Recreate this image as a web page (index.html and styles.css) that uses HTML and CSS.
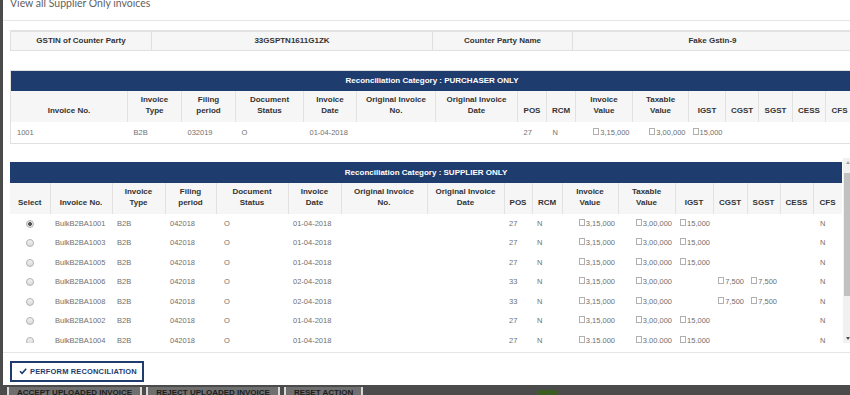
FILE: index.html
```html
<!DOCTYPE html>
<html lang="en">
<head>
    <meta charset="UTF-8">
    <meta name="viewport" content="width=device-width, initial-scale=1.0">
    <title>View all Supplier Only invoices</title>
    <link rel="stylesheet" href="styles.css">
</head>
<body>
    <div class="modal">
        <div class="modal-head">View all Supplier Only invoices</div>
        <div class="modal-body">
            <table class="party">
                <colgroup><col style="width:141px"><col style="width:281px"><col style="width:140px"><col style="width:280px"></colgroup>
                <tr>
                    <td>GSTIN of Counter Party</td>
                    <td>33GSPTN1611G1ZK</td>
                    <td>Counter Party Name</td>
                    <td>Fake Gstin-9</td>
                </tr>
            </table>

            <table class="recon purchaser">
                <colgroup>
                    <col style="width:117px"><col style="width:54px"><col style="width:54px"><col style="width:68px">
                    <col style="width:53px"><col style="width:79px"><col style="width:82px"><col style="width:29px">
                    <col style="width:29px"><col style="width:57px"><col style="width:56px"><col style="width:37px">
                    <col style="width:33px"><col style="width:34px"><col style="width:33px"><col style="width:28px">
                </colgroup>
                <thead>
                    <tr><th class="cat" colspan="16">Reconciliation Category : PURCHASER ONLY</th></tr>
                    <tr>
                        <th>Invoice No.</th><th>Invoice<br>Type</th><th>Filing<br>period</th><th>Document<br>Status</th>
                        <th>Invoice<br>Date</th><th>Original Invoice<br>No.</th><th>Original Invoice<br>Date</th><th>POS</th>
                        <th>RCM</th><th>Invoice<br>Value</th><th>Taxable<br>Value</th><th>IGST</th>
                        <th>CGST</th><th>SGST</th><th>CESS</th><th>CFS</th>
                    </tr>
                </thead>
                <tbody>
                    <tr>
                        <td>1001</td><td>B2B</td><td>032019</td><td>O</td><td>01-04-2018</td><td></td><td></td><td>27</td>
                        <td>N</td><td class="num"><span class="cur">3,15,000</span></td><td class="num"><span class="cur">3,00,000</span></td><td class="num"><span class="cur">15,000</span></td>
                        <td></td><td></td><td></td><td></td>
                    </tr>
                </tbody>
            </table>

            <div class="supplier-wrap">
                <div class="scroll-area">
                    <table class="recon supplier">
                        <colgroup>
                            <col style="width:40px"><col style="width:62px"><col style="width:53px"><col style="width:51px">
                            <col style="width:72px"><col style="width:53px"><col style="width:86px"><col style="width:77px">
                            <col style="width:28px"><col style="width:30px"><col style="width:56px"><col style="width:57px">
                            <col style="width:38px"><col style="width:34px"><col style="width:33px"><col style="width:33px">
                            <col style="width:29px">
                        </colgroup>
                        <thead>
                            <tr><th class="cat" colspan="17">Reconciliation Category : SUPPLIER ONLY</th></tr>
                            <tr>
                                <th>Select</th><th>Invoice No.</th><th>Invoice<br>Type</th><th>Filing<br>period</th>
                                <th>Document<br>Status</th><th>Invoice<br>Date</th><th>Original Invoice<br>No.</th><th>Original Invoice<br>Date</th>
                                <th>POS</th><th>RCM</th><th>Invoice<br>Value</th><th>Taxable<br>Value</th>
                                <th>IGST</th><th>CGST</th><th>SGST</th><th>CESS</th><th>CFS</th>
                            </tr>
                        </thead>
                        <tbody>
                            <tr>
                                <td class="sel"><span class="radio checked"></span></td><td>BulkB2BA1001</td><td>B2B</td><td>042018</td>
                                <td class="st">O</td><td>01-04-2018</td><td></td><td></td><td>27</td><td>N</td>
                                <td class="num"><span class="cur">3,15,000</span></td><td class="num"><span class="cur">3,00,000</span></td><td class="num"><span class="cur">15,000</span></td>
                                <td></td><td></td><td></td><td class="cfs">N</td>
                            </tr>
                            <tr>
                                <td class="sel"><span class="radio"></span></td><td>BulkB2BA1003</td><td>B2B</td><td>042018</td>
                                <td class="st">O</td><td>01-04-2018</td><td></td><td></td><td>27</td><td>N</td>
                                <td class="num"><span class="cur">3,15,000</span></td><td class="num"><span class="cur">3,00,000</span></td><td class="num"><span class="cur">15,000</span></td>
                                <td></td><td></td><td></td><td class="cfs">N</td>
                            </tr>
                            <tr>
                                <td class="sel"><span class="radio"></span></td><td>BulkB2BA1005</td><td>B2B</td><td>042018</td>
                                <td class="st">O</td><td>01-04-2018</td><td></td><td></td><td>27</td><td>N</td>
                                <td class="num"><span class="cur">3,15,000</span></td><td class="num"><span class="cur">3,00,000</span></td><td class="num"><span class="cur">15,000</span></td>
                                <td></td><td></td><td></td><td class="cfs">N</td>
                            </tr>
                            <tr>
                                <td class="sel"><span class="radio"></span></td><td>BulkB2BA1006</td><td>B2B</td><td>042018</td>
                                <td class="st">O</td><td>02-04-2018</td><td></td><td></td><td>33</td><td>N</td>
                                <td class="num"><span class="cur">3,15,000</span></td><td class="num"><span class="cur">3,00,000</span></td><td></td>
                                <td class="num"><span class="cur">7,500</span></td><td class="num"><span class="cur">7,500</span></td><td></td><td class="cfs">N</td>
                            </tr>
                            <tr>
                                <td class="sel"><span class="radio"></span></td><td>BulkB2BA1008</td><td>B2B</td><td>042018</td>
                                <td class="st">O</td><td>02-04-2018</td><td></td><td></td><td>33</td><td>N</td>
                                <td class="num"><span class="cur">3,15,000</span></td><td class="num"><span class="cur">3,00,000</span></td><td></td>
                                <td class="num"><span class="cur">7,500</span></td><td class="num"><span class="cur">7,500</span></td><td></td><td class="cfs">N</td>
                            </tr>
                            <tr>
                                <td class="sel"><span class="radio"></span></td><td>BulkB2BA1002</td><td>B2B</td><td>042018</td>
                                <td class="st">O</td><td>01-04-2018</td><td></td><td></td><td>27</td><td>N</td>
                                <td class="num"><span class="cur">3,15,000</span></td><td class="num"><span class="cur">3,00,000</span></td><td class="num"><span class="cur">15,000</span></td>
                                <td></td><td></td><td></td><td class="cfs">N</td>
                            </tr>
                            <tr>
                                <td class="sel"><span class="radio"></span></td><td>BulkB2BA1004</td><td>B2B</td><td>042018</td>
                                <td class="st">O</td><td>01-04-2018</td><td></td><td></td><td>27</td><td>N</td>
                                <td class="num"><span class="cur">3,15,000</span></td><td class="num"><span class="cur">3,00,000</span></td><td class="num"><span class="cur">15,000</span></td>
                                <td></td><td></td><td></td><td class="cfs">N</td>
                            </tr>
                        </tbody>
                    </table>
                </div>
                <div class="scrollbar">
                    <div class="arrow up"></div>
                    <div class="track"><div class="thumb"></div></div>
                    <div class="arrow down"></div>
                </div>
            </div>
        </div>
        <div class="modal-foot">
            <button class="btn-reconcile">
                <svg width="8" height="8" viewBox="0 0 8 8"><polyline points="1,4.3 3.1,6.4 7.2,1.8" fill="none" stroke="#1f3c6e" stroke-width="1.6"/></svg>
                PERFORM RECONCILIATION
            </button>
        </div>
    </div>
    <div class="page-actions">
        <span class="act">ACCEPT UPLOADED INVOICE</span>
        <span class="act">REJECT UPLOADED INVOICE</span>
        <span class="act">RESET ACTION</span>
        <span class="green"></span>
    </div>
</body>
</html>
```
FILE: styles.css
```css
*{
    margin: 0;
    padding: 0;
    box-sizing: border-box;
}
body{
    height: 395px;
    overflow: hidden;
    background: #4b4b4b;
    font-family: "Liberation Sans", Arial, sans-serif;
}
.modal{
    margin: -6px 0 0 3px;
    width: 862px;
    background: #fff;
}
.modal-head{
    height: 27px;
    padding: 1px 7px 0;
    border-bottom: 1px solid #e6e6e6;
    font-family: Lato, sans-serif;
    font-size: 10.5px;
    line-height: 16px;
    color: #5f5f5f;
}
.modal-body{
    padding: 9px 0 9px 7px;
}

/* counter party strip */
.party{
    width: 842px;
    table-layout: fixed;
    border-collapse: collapse;
    border: 1px solid #e0e0e0;
    border-top: 2px solid #e2e2e2;
}
.party td{
    height: 19px;
    background: #f6f6f6;
    border-right: 1px solid #e0e0e0;
    text-align: center;
    font-size: 8px;
    font-weight: bold;
    color: #333;
}

/* reconciliation tables */
.recon{
    width: 842px;
    table-layout: fixed;
    border-collapse: collapse;
}
.purchaser{
    margin-top: 19px;
    border: 1px solid #e0e0e0;
}
.recon th{
    height: 31px;
    padding: 0 2px 6px;
    background: #f6f6f6;
    border-right: 1px solid #e2e2e2;
    vertical-align: bottom;
    text-align: center;
    font-size: 8px;
    line-height: 11px;
    font-weight: bold;
    color: #333;
    white-space: nowrap;
}
.recon th.cat{
    height: 21px;
    padding: 0;
    background: #1f3c6e;
    border: none;
    vertical-align: middle;
    color: #fff;
}
.recon td{
    height: 21px;
    padding: 0 3px 0 6px;
    font-size: 7.5px;
    color: #707070;
    white-space: nowrap;
    overflow: hidden;
}
.recon td.num{
    text-align: right;
    padding: 0 3px 0 0;
}
.cur::before{
    content: "";
    display: inline-block;
    width: 4px;
    height: 5px;
    margin-right: 1px;
    border: 1px solid #b0b0b0;
    vertical-align: 0;
}

/* supplier table with its scroller */
.supplier-wrap{
    display: flex;
    width: 842px;
    height: 185px;
    margin-top: 14px;
}
.scroll-area{
    flex: 0 0 832px;
    padding-top: 4px;
    overflow: hidden;
}
.supplier{
    width: 832px;
}
.supplier td{
    height: 19.5px;
    padding-left: 5px;
}
.supplier td.st{
    padding-left: 8px;
}
.supplier td.cfs{
    padding-left: 7px;
}
.supplier td.sel{
    padding: 0;
    text-align: center;
}
.radio{
    display: inline-block;
    width: 8px;
    height: 8px;
    border: 1px solid #b4b4b4;
    border-radius: 50%;
    background: linear-gradient(#f3f3f3, #d9d9d9);
    vertical-align: middle;
}
.radio.checked{
    background: radial-gradient(circle, #555 0 1.6px, #e6e6e6 2.2px);
}
.scrollbar{
    flex: 0 0 10px;
    margin-left: 1px;
    display: flex;
    flex-direction: column;
    background: #f1f1f1;
}
.arrow{
    height: 9px;
    display: flex;
    justify-content: center;
    align-items: center;
}
.arrow::after{
    content: "";
    border-left: 2.5px solid transparent;
    border-right: 2.5px solid transparent;
}
.arrow.up::after{
    border-bottom: 3px solid #a3a3a3;
}
.arrow.down::after{
    border-top: 3px solid #505050;
}
.track{
    flex: 1;
    padding: 6px 1px 0;
}
.thumb{
    height: 123px;
    background: #c1c1c1;
}

/* footer */
.modal-foot{
    height: 33px;
    padding: 8px 0 0 7px;
    border-top: 1px solid #e6e6e6;
}
.btn-reconcile{
    display: flex;
    align-items: center;
    gap: 3px;
    width: 134px;
    height: 21px;
    padding-left: 7px;
    background: #fff;
    border: 2px solid #1f3c6e;
    font-family: "Liberation Sans", Arial, sans-serif;
    font-size: 7.5px;
    font-weight: bold;
    color: #1f3c6e;
    letter-spacing: 0.15px;
}

/* page behind the overlay */
.page-actions{
    display: flex;
    align-items: flex-start;
    gap: 4px;
    padding: 2px 0 0 7px;
}
.act{
    padding: 0 8px;
    background: #6f6f6f;
    border-left: 2px solid #d8d8d8;
    border-right: 2px solid #d8d8d8;
    font-size: 8px;
    font-weight: bold;
    color: #1d1d1d;
    line-height: 12px;
}
.green{
    width: 20px;
    height: 12px;
    margin: 3px 0 0 170px;
    background: #3b5d22;
}
```
